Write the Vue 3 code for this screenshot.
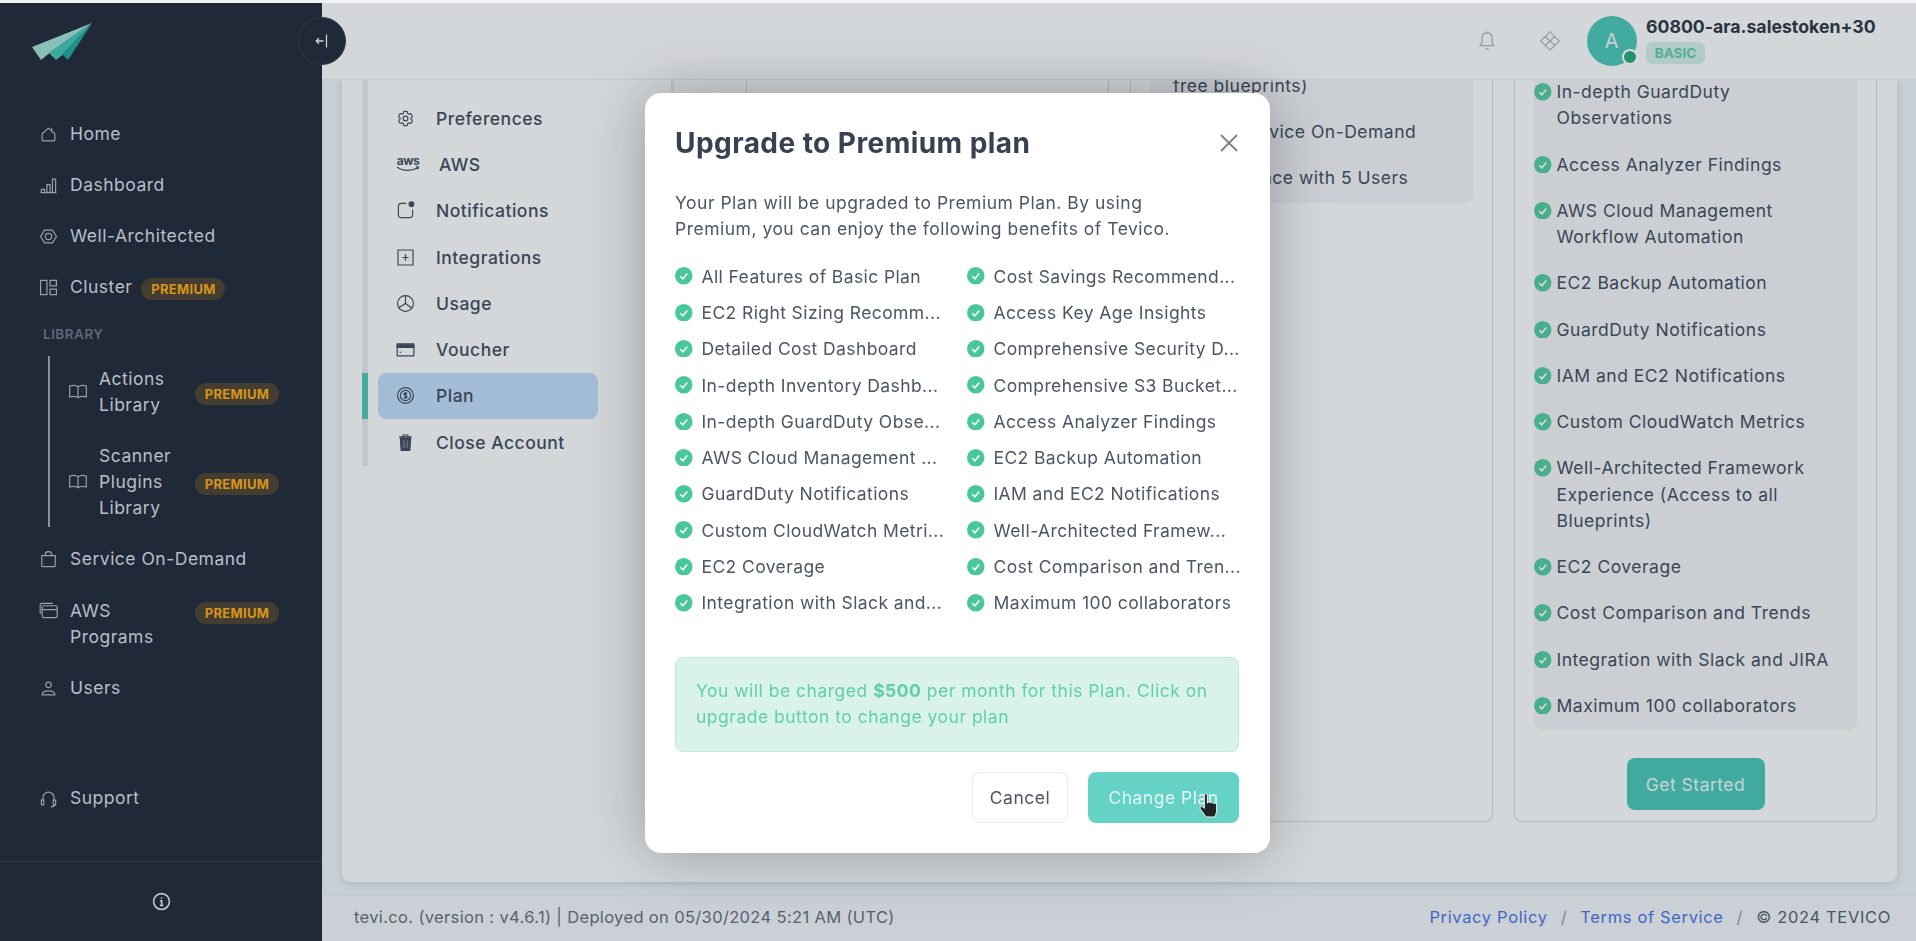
<template>
  <div class="strip"></div>
  <div class="layout">
    <aside class="sidebar">
      <div class="logo">
        <svg width="62" height="40" viewBox="0 0 62 40">
          <polygon points="61,1 1,25 10,38 21,29" fill="#8abfb7" />
          <polygon points="61,1 18,31 25,38 34,31" fill="#3aa99f" />
          <polygon points="61,1 31,32 37,38" fill="#1f8f88" />
        </svg>
      </div>
      <button class="collapse">
        <svg width="16" height="16" viewBox="0 0 16 16" fill="none" stroke="#cdd2da" stroke-width="1.3">
          <path d="M12.5 1.5v13M9.5 8H2M5 5.3 2.2 8 5 10.7" />
        </svg>
      </button>

      <nav class="nav">
        <div v-for="item in topNav" :key="item.label" class="nav-row">
          <svg class="nav-icon" viewBox="0 0 24 24"><path :d="icons[item.icon]" /></svg>
          <span class="nav-label">{{ item.label }}</span>
          <span v-if="item.premium" class="premium">PREMIUM</span>
        </div>

        <div class="nav-heading">LIBRARY</div>
        <div class="library">
          <div class="nav-row sub">
            <svg class="nav-icon" viewBox="0 0 24 24"><path :d="icons.book" /></svg>
            <span class="nav-label">Actions<br />Library</span>
            <span class="premium right">PREMIUM</span>
          </div>
          <div class="nav-row sub">
            <svg class="nav-icon" viewBox="0 0 24 24"><path :d="icons.book" /></svg>
            <span class="nav-label">Scanner<br />Plugins<br />Library</span>
            <span class="premium right">PREMIUM</span>
          </div>
        </div>

        <div class="nav-row">
          <svg class="nav-icon" viewBox="0 0 24 24"><path :d="icons.bag" /></svg>
          <span class="nav-label">Service On-Demand</span>
        </div>
        <div class="nav-row top">
          <svg class="nav-icon" viewBox="0 0 24 24"><path :d="icons.programs" /></svg>
          <span class="nav-label">AWS<br />Programs</span>
          <span class="premium right">PREMIUM</span>
        </div>
        <div class="nav-row">
          <svg class="nav-icon" viewBox="0 0 24 24"><path :d="icons.user" /></svg>
          <span class="nav-label">Users</span>
        </div>
        <div class="nav-row support">
          <svg class="nav-icon" viewBox="0 0 24 24"><path :d="icons.headset" /></svg>
          <span class="nav-label">Support</span>
        </div>
      </nav>

      <div class="side-foot">
        <svg width="19" height="19" viewBox="0 0 24 24" fill="none" stroke="#c3c9d2" stroke-width="2">
          <circle cx="12" cy="12" r="10" />
          <path d="M10 11h2.2v6M10 17h4.4M12 7v1.4" />
        </svg>
      </div>
    </aside>

    <div class="main">
      <header class="header">
        <svg class="head-icon" viewBox="0 0 24 24">
          <path d="M12 3c-3.500 0-5.500 2.600-5.500 6v5l-2 3h15l-2-3V9c0-3.400-2-6-5.500-6zM10.500 20c.8 1 2.200 1 3 0M12 1.500V3" />
        </svg>
        <svg class="head-icon diamond" viewBox="0 0 24 24">
          <path d="M12 2l5 5-5 5-5-5zM7 7l5 5-5 5-5-5zM17 7l5 5-5 5-5-5zM12 12l5 5-5 5-5-5z" />
        </svg>
        <div class="avatar">
          A
          <span class="status"></span>
        </div>
        <div class="account">
          <div class="account-name">60800-ara.salestoken+30</div>
          <span class="basic">BASIC</span>
        </div>
      </header>

      <div class="content">
        <section class="panel">
          <div class="settings">
            <div v-for="row in settings" :key="row.label" class="set-row" :class="{ active: row.label === 'Plan' }">
              <svg v-if="row.icon !== 'aws'" class="set-icon" viewBox="0 0 24 24">
                <path v-for="p in setIcons[row.icon]" :key="p.d" :d="p.d" :class="p.c" />
              </svg>
              <span v-else class="aws-mark">
                aws
                <svg width="24" height="6" viewBox="0 0 24 6" fill="none" stroke="#374151" stroke-width="1.300">
                  <path d="M1 1c6 4.500 15 4.500 21 .5M20 .8l2.500.3-.8 2.200" />
                </svg>
              </span>
              <span>{{ row.label }}</span>
            </div>
          </div>
          <div class="divider"></div>
          <div class="plans">
            <div class="plan"></div>
            <div class="plan">
              <ul class="features mid">
                <li class="no-check">free blueprints)</li>
                <li><svg class="check" viewBox="0 0 20 20"><circle cx="10" cy="10" r="10" /><path d="M6 10.500l3 3 5-6" /></svg>Free Service On-Demand</li>
                <li><svg class="check" viewBox="0 0 20 20"><circle cx="10" cy="10" r="10" /><path d="M6 10.500l3 3 5-6" /></svg>Workspace with 5 Users</li>
              </ul>
            </div>
            <div class="plan">
              <ul class="features last">
                <li v-for="text in premiumList" :key="text">
                  <svg class="check" viewBox="0 0 20 20"><circle cx="10" cy="10" r="10" /><path d="M6 10.500l3 3 5-6" /></svg>
                  <span>{{ text }}</span>
                </li>
              </ul>
              <button class="get-started">Get Started</button>
            </div>
          </div>
        </section>
      </div>

      <footer class="footer">
        <span class="foot-left">tevi.co. (version : v4.6.1) | Deployed on 05/30/2024 5:21 AM (UTC)</span>
        <span class="foot-right">
          <a>Privacy Policy</a>
          <i>/</i>
          <a>Terms of Service</a>
          <i>/</i>
          <span>© 2024 TEVICO</span>
        </span>
      </footer>
      <div class="overlay"></div>
    </div>
  </div>

  <div class="modal-wrap">
    <div class="modal">
      <div class="modal-head">
        <h2>Upgrade to Premium plan</h2>
        <svg width="20" height="20" viewBox="0 0 20 20" fill="none" stroke="#7b8088" stroke-width="1.800">
          <path d="M2 2l16 16M18 2 2 18" />
        </svg>
      </div>
      <p class="intro">
        Your Plan will be upgraded to Premium Plan. By using<br />
        Premium, you can enjoy the following benefits of Tevico.
      </p>
      <div class="benefits">
        <div v-for="text in benefits" :key="text" class="benefit">
          <svg class="check" viewBox="0 0 20 20"><circle cx="10" cy="10" r="10" /><path d="M6 10.500l3 3 5-6" /></svg>
          <span>{{ text }}</span>
        </div>
      </div>
      <div class="alert">
        You will be charged <b>$500</b> per month for this Plan. Click on upgrade button to change your plan
      </div>
      <div class="actions">
        <button class="cancel">Cancel</button>
        <button class="change">
          Change Plan
          <svg class="hand" width="24" height="28" viewBox="0 0 20 24">
            <path d="M6 2.500c0-1.500 2.600-1.500 2.600 0v7l.4-.1c0-1.300 2.400-1.300 2.400 0l.3.2c.2-1.200 2.300-1 2.300.3l.3.3c.4-1 2.200-.8 2.200.7v5c0 2.500-1.200 4.100-1.600 5.500H7.500L2.500 14.500c-.9-1.200.7-2.800 2-1.800L6 14V2.500z" fill="#232325" stroke="#fff" stroke-width=".8" />
          </svg>
        </button>
      </div>
    </div>
  </div>
</template>

<script setup>
const icons = {
  home: 'M4 11l8-7 8 7v8a1 1 0 0 1-1 1H5a1 1 0 0 1-1-1zM16 4v3',
  dashboard: 'M2 21h20M3 21v-4h4v4M10 21V11h4v10M17 21V4h4v17',
  well: 'M7 4h10l5 8-5 8H7l-5-8zM8 12a4 4 0 1 0 8 0a4 4 0 1 0-8 0',
  cluster: 'M2 3h8v18H2zM14 3h8v7h-8zM14 14h8v7h-8z',
  book: 'M1.500 5c3.500-1 8-1 10.500 1 2.500-2 7-2 10.500-1v14c-3.500-1-8-1-10.500 1-2.500-2-7-2-10.500-1zM12 6v14',
  bag: 'M3.500 7h17v13a1 1 0 0 1-1 1h-15a1 1 0 0 1-1-1zM8 7V5a4 3 0 0 1 8 0v2',
  programs: 'M6 6h15a2 2 0 0 1 2 2v11a2 2 0 0 1-2 2H6a2 2 0 0 1-2-2V8a2 2 0 0 1 2-2zM4 11h19M1.500 16V5a2 2 0 0 1 2-2h14',
  user: 'M12 4a3.500 3.500 0 1 0 0 7 3.500 3.500 0 0 0 0-7zM4 20c0-3.500 3-5 8-5s8 1.500 8 5z',
  headset: 'M5 14v-3a7 7 0 0 1 14 0v3M3 14h3v6H3zM18 14h3v6h-3zM20 20c0 1.500-2 2.500-5 2.500'
}

const topNav = [
  { label: 'Home', icon: 'home' },
  { label: 'Dashboard', icon: 'dashboard' },
  { label: 'Well-Architected', icon: 'well' },
  { label: 'Cluster', icon: 'cluster', premium: true }
]

const setIcons = {
  gear: [
    { d: 'M9.594 3.940c.09-.542.56-.94 1.110-.94h2.593c.55 0 1.020.398 1.110.94l.213 1.281c.063.374.313.686.645.870.074.04.147.083.220.127.324.196.720.257 1.075.124l1.217-.456a1.125 1.125 0 011.370.490l1.296 2.247a1.125 1.125 0 01-.26 1.431l-1.003.827c-.293.24-.438.613-.431.992a6.759 6.759 0 010 .255c-.007.378.138.750.430.990l1.005.828c.424.350.534.954.260 1.430l-1.298 2.247a1.125 1.125 0 01-1.369.491l-1.217-.456c-.355-.133-.750-.072-1.076.124a6.570 6.570 0 01-.220.128c-.331.183-.581.495-.644.869l-.213 1.280c-.09.543-.56.941-1.110.941h-2.594c-.55 0-1.020-.398-1.110-.94l-.213-1.281c-.062-.374-.312-.686-.644-.870a6.520 6.520 0 01-.220-.127c-.325-.196-.720-.257-1.076-.124l-1.217.456a1.125 1.125 0 01-1.369-.490l-1.297-2.247a1.125 1.125 0 01.260-1.431l1.004-.827c.292-.24.437-.613.430-.992a6.932 6.932 0 010-.255c.007-.378-.138-.750-.430-.990l-1.004-.828a1.125 1.125 0 01-.26-1.430l1.297-2.247a1.125 1.125 0 011.370-.491l1.216.456c.356.133.751.072 1.076-.124.072-.044.146-.087.220-.128.332-.183.582-.495.644-.869l.214-1.281z' },
    { d: 'M15 12a3 3 0 11-6 0 3 3 0 016 0z' }
  ],
  notif: [
    { d: 'M13 3H7a4 4 0 0 0-4 4v10a4 4 0 0 0 4 4h10a4 4 0 0 0 4-4v-6' },
    { d: 'M16.500 4a3 3 0 1 0 6 0a3 3 0 1 0-6 0', c: 'solid' }
  ],
  plus: [{ d: 'M2.500 2.500h19v19h-19z' }, { d: 'M12 8v8M8 12h8' }],
  pie: [{ d: 'M2 12a10 10 0 1 0 20 0a10 10 0 1 0-20 0' }, { d: 'M12 2v10l8 6M12 12l-8.500 5.500' }],
  card: [{ d: 'M1.500 5h21v15h-21z' }, { d: 'M1.500 6h21v3.500h-21z', c: 'solid' }, { d: 'M4.500 15.500h2' }],
  dollar: [
    { d: 'M2 12a10 10 0 1 0 20 0a10 10 0 1 0-20 0' },
    { d: 'M5.500 12a6.500 6.500 0 1 0 13 0a6.500 6.500 0 1 0-13 0' },
    { d: 'M14 9.800c-.8-1.300-4-1.300-4 .6s4 1.300 4 3.200-3.200 1.900-4 .6M12 7.500v9' }
  ],
  trash: [
    { d: 'M4 5h16M9 5V2.500h6V5' },
    { d: 'M5.500 6h13l-1 16h-11z', c: 'solid' },
    { d: 'M10 9v10M14 9v10', c: 'cut' }
  ]
}

const settings = [
  { label: 'Preferences', icon: 'gear' },
  { label: 'AWS', icon: 'aws' },
  { label: 'Notifications', icon: 'notif' },
  { label: 'Integrations', icon: 'plus' },
  { label: 'Usage', icon: 'pie' },
  { label: 'Voucher', icon: 'card' },
  { label: 'Plan', icon: 'dollar' },
  { label: 'Close Account', icon: 'trash' }
]

const premiumList = [
  'In-depth GuardDuty Observations',
  'Access Analyzer Findings',
  'AWS Cloud Management Workflow Automation',
  'EC2 Backup Automation',
  'GuardDuty Notifications',
  'IAM and EC2 Notifications',
  'Custom CloudWatch Metrics',
  'Well-Architected Framework Experience (Access to all Blueprints)',
  'EC2 Coverage',
  'Cost Comparison and Trends',
  'Integration with Slack and JIRA',
  'Maximum 100 collaborators'
]

const benefits = [
  'All Features of Basic Plan',
  'Cost Savings Recommend...',
  'EC2 Right Sizing Recomm...',
  'Access Key Age Insights',
  'Detailed Cost Dashboard',
  'Comprehensive Security D...',
  'In-depth Inventory Dashb...',
  'Comprehensive S3 Bucket...',
  'In-depth GuardDuty Obse...',
  'Access Analyzer Findings',
  'AWS Cloud Management ...',
  'EC2 Backup Automation',
  'GuardDuty Notifications',
  'IAM and EC2 Notifications',
  'Custom CloudWatch Metri...',
  'Well-Architected Framew...',
  'EC2 Coverage',
  'Cost Comparison and Tren...',
  'Integration with Slack and...',
  'Maximum 100 collaborators'
]
</script>

<style>
html,
body {
  margin: 0;
  height: 100%;
  overflow: hidden;
}
</style>

<style scoped>
* {
  box-sizing: border-box;
}

.strip {
  height: 3px;
  background: #f1f3f4;
}

.layout {
  display: flex;
  height: 938px;
  font-family: Inter, "Noto Sans", sans-serif;
  font-size: 17.5px;
  letter-spacing: 0.5px;
  color: #374151;
}

.sidebar {
  position: relative;
  z-index: 2;
  width: 322px;
  flex: none;
  display: flex;
  flex-direction: column;
  background: #1f2937;
  color: #b9bfc9;
}

.logo {
  height: 105.5px;
  padding: 19px 0 0 31px;
}

.collapse {
  position: absolute;
  top: 14px;
  right: -24px;
  width: 48px;
  height: 48px;
  border-radius: 50%;
  border: 1px solid #2f3a49;
  background: #1f2937;
  display: flex;
  align-items: center;
  justify-content: center;
  padding: 0;
}

.nav {
  flex: 1;
  padding-left: 39px;
  padding-right: 43px;
}

.nav-row {
  display: flex;
  align-items: center;
  padding: 12.5px 0;
  line-height: 26px;
}

.nav-row.top {
  align-items: flex-start;
  margin-top: 1px;
}

.nav-row.support {
  margin-top: 59px;
}

.nav-icon {
  width: 19px;
  height: 19px;
  flex: none;
  margin-right: 12px;
  fill: none;
  stroke: #98a0ac;
  stroke-width: 1.5;
}

.nav-row.top .nav-icon {
  margin-top: 3px;
}

.nav-label {
  white-space: nowrap;
}

.premium {
  margin-left: 9px;
  margin-top: 4px;
  height: 22px;
  width: 84px;
  border-radius: 11px;
  background: #433d32;
  color: #d8951a;
  font-size: 13px;
  font-weight: 700;
  letter-spacing: 0.3px;
  line-height: 22px;
  text-align: center;
}

.premium.right {
  margin-left: auto;
}

.nav-heading {
  padding: 11px 0 9px 4px;
  font-size: 13.500px;
  line-height: 20px;
  font-weight: 600;
  color: #5f6875;
}

.library {
  margin: 3px 0 7px 9px;
  border-left: 2px solid #8b919c;
  padding-left: 18px;
  padding-top: 10px;
  height: 171px;
}

.nav-row.sub {
  padding-top: 0;
  padding-bottom: 25px;
}

.nav-row.sub .nav-icon {
  width: 20px;
  margin-right: 11px;
}

.side-foot {
  height: 80px;
  border-top: 1px solid #2f3a49;
  display: flex;
  align-items: center;
  justify-content: center;
}

.main {
  position: relative;
  flex: 1;
  min-width: 0;
  display: flex;
  flex-direction: column;
  background: #ecf0f5;
}

.overlay {
  position: absolute;
  inset: 0;
  background: rgba(75, 85, 99, 0.218);
}

.header {
  height: 77px;
  flex: none;
  display: flex;
  align-items: center;
  background: #fbfbfb;
  border-bottom: 1px solid #e5e9f0;
  padding-right: 39px;
  justify-content: flex-end;
}

.head-icon {
  width: 22px;
  height: 22px;
  flex: none;
  fill: none;
  stroke: #a8b0be;
  stroke-width: 1.4;
  margin-right: 41px;
}

.head-icon.diamond {
  margin-right: 26px;
}

.avatar {
  position: relative;
  width: 50px;
  height: 50px;
  flex: none;
  border-radius: 50%;
  background: #41c3b0;
  color: #e6f5f3;
  font-size: 20px;
  display: flex;
  align-items: center;
  justify-content: center;
  margin-right: 9px;
}

.status {
  position: absolute;
  right: -1px;
  bottom: 1px;
  width: 16px;
  height: 16px;
  border-radius: 50%;
  background: #1aa56e;
  border: 2px solid #fff;
}

.account {
  width: 231px;
  display: flex;
  flex-direction: column;
  align-items: flex-start;
  margin-top: -3px;
}

.account-name {
  font-weight: 700;
  font-size: 17.700px;
  letter-spacing: 0;
  line-height: 24px;
  color: #1f2937;
  white-space: nowrap;
}

.basic {
  margin-top: 3px;
  width: 59px;
  height: 22px;
  border-radius: 6px;
  background: #cfeee3;
  color: #5cc69f;
  font-size: 13.500px;
  font-weight: 700;
  letter-spacing: 0;
  line-height: 22px;
  text-align: center;
}

.content {
  flex: 1;
  min-height: 0;
  padding: 0 19px 13px 20px;
  overflow: hidden;
}

.panel {
  display: flex;
  height: 100%;
  background: #fafbfc;
  border-radius: 0 0 8px 8px;
  box-shadow: 0 1px 6px rgba(150, 170, 190, 0.5);
  padding: 0 20px 60px;
}

.settings {
  width: 309px;
  flex: none;
  align-self: flex-start;
  position: relative;
  border-left: 6px solid #e5e7eb;
  padding: 15px 73px 0 10px;
  height: 386px;
}

.set-row {
  display: flex;
  align-items: center;
  height: 46.300px;
  padding-left: 18px;
  border-radius: 8px;
  font-weight: 500;
  white-space: nowrap;
}

.set-row.active {
  position: relative;
  background: #bddaf9;
}

.set-row.active::before {
  content: '';
  position: absolute;
  left: -16px;
  top: 0;
  bottom: 0;
  width: 6px;
  background: #41c3b0;
}

.set-icon {
  width: 19px;
  height: 19px;
  flex: none;
  margin-right: 21px;
  fill: none;
  stroke: #374151;
  stroke-width: 1.5;
}

.set-icon .solid {
  fill: #374151;
}

.set-icon .cut {
  stroke: #7c8490;
}

.aws-mark {
  width: 24px;
  margin-right: 19px;
  display: flex;
  flex-direction: column;
  align-items: center;
  font-size: 12px;
  font-weight: 700;
  letter-spacing: -0.5px;
  line-height: 10px;
}

.divider {
  width: 3px;
  flex: none;
  background: #e5e7eb;
}

.plans {
  flex: 1;
  display: flex;
  justify-content: flex-end;
  gap: 21px;
}

.plan {
  width: 363px;
  flex: none;
  border: 1px solid #d1d5db;
  border-top: 0;
  border-radius: 0 0 8px 8px;
  display: flex;
  flex-direction: column;
  overflow: hidden;
}

.features {
  list-style: none;
  margin: -1px 19px 0;
  padding: 0 10px 11px 0;
  background: #f0f1f4;
  border-radius: 0 0 8px 8px;
  display: flex;
  flex-direction: column;
  gap: 19.900px;
  line-height: 26.350px;
}

.features.mid {
  margin-top: -7px;
  padding-left: 23px;
  padding-right: 0;
}

.features li {
  display: flex;
  gap: 5px;
  align-items: flex-start;
}

.check {
  width: 17.500px;
  height: 17.500px;
  flex: none;
  margin-top: 4px;
  fill: #48c799;
}

.check path {
  fill: none;
  stroke-width: 1.800;
  stroke: #fff;
}

.get-started {
  align-self: center;
  margin-top: 28px;
  width: 138px;
  height: 52px;
  border: 0;
  border-radius: 8px;
  background: #41c3b0;
  color: #e8f8f5;
  font: inherit;
  letter-spacing: inherit;
}

.footer {
  height: 46px;
  flex: none;
  display: flex;
  align-items: center;
  justify-content: space-between;
  padding: 0 25px 3px 32px;
  font-size: 16.500px;
  letter-spacing: 0.35px;
  color: #4b5563;
  background: #f0f3f6;
  border-top: 1px solid #e5e9f0;
}

.foot-left {
  color: #5b6472;
}

.foot-right {
  display: flex;
  gap: 13px;
  letter-spacing: 0.65px;
}

.foot-right a {
  color: #3b6de0;
}

.foot-right i {
  font-style: normal;
  color: #8b919c;
}

.modal-wrap {
  position: fixed;
  inset: 93px 0 0;
  z-index: 3;
  display: flex;
  justify-content: center;
  align-items: flex-start;
  padding-right: 1px;
  font-family: Inter, "Noto Sans", sans-serif;
  font-size: 17.5px;
  letter-spacing: 0.5px;
}

.modal {
  width: 625px;
  height: 760px;
  background: #fff;
  border-radius: 16px;
  box-shadow: 0 0 60px rgba(0, 0, 0, 0.28);
  padding: 32px 31px 30px 30px;
  color: #4b5563;
}

.modal-head {
  display: flex;
  justify-content: space-between;
  align-items: center;
  height: 36px;
}

.modal-head h2 {
  margin: 0;
  font-size: 28px;
  letter-spacing: 0.45px;
  font-weight: 700;
  color: #374151;
}

.intro {
  margin: 29px 0 0;
  line-height: 26px;
}

.benefits {
  display: grid;
  grid-template-columns: 272px 272px;
  column-gap: 20px;
  margin-top: 16px;
  letter-spacing: 0.4px;
}

.benefit {
  display: flex;
  align-items: center;
  gap: 9px;
  height: 36.300px;
  white-space: nowrap;
  min-width: 0;
}

.benefit .check {
  margin-top: 0;
}

.alert {
  margin-top: 36px;
  height: 95px;
  padding: 20px;
  line-height: 26.500px;
  background: #daf3e8;
  border: 1px solid #bfe9d8;
  border-radius: 8px;
  color: #5fd0a5;
}

.actions {
  display: flex;
  justify-content: flex-end;
  gap: 20px;
  margin-top: 20px;
}

.actions button {
  height: 51px;
  border-radius: 8px;
  font: inherit;
  letter-spacing: inherit;
  padding: 0;
}

.cancel {
  width: 96px;
  background: #fff;
  border: 1px solid #ececec;
  color: #4b5563;
}

.change {
  position: relative;
  width: 151px;
  background: #64d2c5;
  border: 0;
  color: #e4f8f5;
}

.hand {
  position: absolute;
  left: 109px;
  top: 20px;
}
</style>
